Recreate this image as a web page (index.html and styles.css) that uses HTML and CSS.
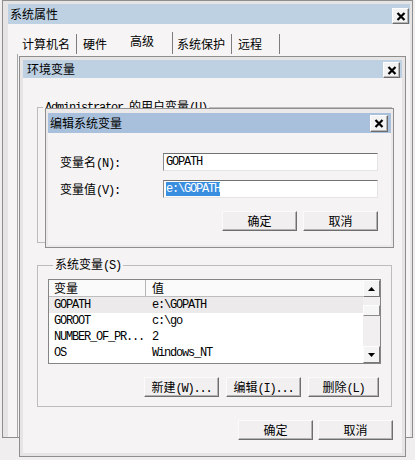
FILE: index.html
```html
<!DOCTYPE html>
<html lang="zh-CN">
<head>
<meta charset="utf-8">
<title>环境变量</title>
<link rel="stylesheet" href="styles.css">
</head>
<body>
<div class="win sys">
  <div class="titlebar tb-sys">
    <span class="title">系统属性</span>
    <span class="close"><svg width="10" height="9" viewBox="0 0 10 9"><path d="M1.5 1 L8.5 8 M8.5 1 L1.5 8" stroke="#000" stroke-width="2.2"/></svg></span>
  </div>
  <div class="syspage">
    <div class="tabs">
      <span class="tab t1">计算机名</span>
      <span class="tab t2">硬件</span>
      <span class="tab t3">高级</span>
      <span class="tab t4">系统保护</span>
      <span class="tab t5">远程</span>
    </div>
    <div class="panel"></div>
  </div>
</div>

<div class="win env">
  <div class="titlebar tb-env">
    <span class="title">环境变量</span>
    <span class="close"><svg width="10" height="9" viewBox="0 0 10 9"><path d="M1.5 1 L8.5 8 M8.5 1 L1.5 8" stroke="#000" stroke-width="2.2"/></svg></span>
  </div>
  <div class="envbody">
    <fieldset class="group user"><legend><span class="m">Administrator </span>的用户变量<span class="m">(U)</span></legend></fieldset>
    <fieldset class="group sysvars"><legend>系统变量<span class="m">(S)</span></legend>
      <div class="list">
        <div class="lv">
          <div class="lvhead"><span class="c1">变量</span><span class="c2">值</span></div>
          <div class="lvrow cur"><span class="c1 m">GOPATH</span><span class="c2 m">e:\GOPATH</span></div>
          <div class="lvrow"><span class="c1 m">GOROOT</span><span class="c2 m">c:\go</span></div>
          <div class="lvrow"><span class="c1 m">NUMBER_OF_PR...</span><span class="c2 m">2</span></div>
          <div class="lvrow"><span class="c1 m">OS</span><span class="c2 m">Windows_NT</span></div>
        </div>
        <div class="vscroll">
          <span class="sbtn"><svg width="7" height="4" viewBox="0 0 7 4"><path d="M0 4 L3.5 0 L7 4 Z" fill="#000"/></svg></span>
          <span class="track"><span class="thumb"></span></span>
          <span class="sbtn"><svg width="7" height="4" viewBox="0 0 7 4"><path d="M0 0 L3.5 4 L7 0 Z" fill="#000"/></svg></span>
        </div>
      </div>
      <div class="btnrow grp">
        <button class="btn">新建<span class="m">(W)...</span></button>
        <button class="btn">编辑<span class="m">(I)...</span></button>
        <button class="btn narrow">删除<span class="m">(L)</span></button>
      </div>
    </fieldset>
    <div class="btnrow dlg">
      <button class="btn">确定</button>
      <button class="btn">取消</button>
    </div>
  </div>
</div>

<div class="win edit">
  <div class="titlebar tb-edit">
    <span class="title">编辑系统变量</span>
    <span class="close big"><svg width="10" height="9" viewBox="0 0 10 9"><path d="M1.5 1 L8.5 8 M8.5 1 L1.5 8" stroke="#000" stroke-width="2.2"/></svg></span>
  </div>
  <div class="editbody">
    <div class="form">
      <span class="lbl">变量名<span class="m">(N):</span></span>
      <div class="field m">GOPATH</div>
      <span class="lbl">变量值<span class="m">(V):</span></span>
      <div class="field m"><span class="selected">e:\GOPATH</span></div>
    </div>
    <div class="btnrow ed">
      <button class="btn">确定</button>
      <button class="btn">取消</button>
    </div>
  </div>
</div>
</body>
</html>
```

FILE: styles.css
```css
* { box-sizing: border-box; }
html, body { margin: 0; padding: 0; }
body {
  position: relative;
  width: 415px;
  height: 460px;
  overflow: hidden;
  background: #f0eeee;
  font-family: "Noto Sans CJK SC", "Noto Sans", sans-serif;
  font-size: 12px;
  color: #000;
}
.m {
  font-family: "Liberation Mono", monospace;
  font-size: 12px;
  letter-spacing: -1.2px;
}

/* windows */
.win {
  position: absolute;
  display: flex;
  flex-direction: column;
  border: 1px solid #8e8e8e;
  background: #e6e4e4;
}
.titlebar {
  flex: none;
  display: flex;
  align-items: center;
  justify-content: space-between;
  background: #bdd1e3;
}
.title { line-height: 14px; white-space: nowrap; }
.close {
  width: 17px;
  height: 16px;
  display: flex;
  align-items: center;
  justify-content: center;
  background: #f4f3f3;
  border: 1px solid;
  border-color: #fdfdfd #6c6c6c #6c6c6c #fdfdfd;
  box-shadow: inset -1px -1px 0 #b5b5b5;
}

/* outer: 系统属性 */
.sys { left: 2px; top: 0; width: 411px; height: 438px; padding: 3px 2px 0 5px; }
.tb-sys { height: 20px; padding-left: 2px; align-items: flex-start; }
.tb-sys .title { margin-top: 3px; }
.tb-sys .close { margin-top: 4px; margin-right: 1px; }
.syspage { flex: 1; display: flex; flex-direction: column; background: #f6f4f4; padding-left: 9px; }
.tabs { display: flex; margin-top: 10px; height: 20px; }
.tab { height: 20px; line-height: 20px; white-space: nowrap; border-right: 1px solid #7d7d7d; }
.t1 { width: 60px; padding-left: 5px; }
.t2 { width: 45px; padding-left: 6px; border-right-color: transparent; }
.t3 { width: 51px; padding-left: 8px; line-height: 18px; margin-top: -2px; height: 22px; }
.t4 { width: 59px; padding-left: 4px; }
.t5 { width: 48px; padding-left: 6px; }
.panel { flex: 1; border-left: 1px solid #a6a6a6; }

/* env window */
.env { left: 19px; top: 56px; width: 387px; height: 401px; padding: 3px; }
.tb-env { height: 18px; padding-left: 4px; padding-right: 2px; }
.tb-env .close { height: 16px; margin-top: 2px; }
.envbody {
  flex: 1;
  display: flex;
  flex-direction: column;
  background: #f5f3f3;
  padding: 0 10px 0 14px;
}
.group {
  margin: 0;
  border: 1px solid #bdbbbb;
  min-width: 0;
}
.group legend {
  margin-left: 5px;
  padding: 0 2px;
  line-height: 16px;
  white-space: nowrap;
}
.user { margin-top: 20px; height: 145px; padding: 0; }
.sysvars { margin-top: 13px; padding: 5px 10px 9px 10px; }

.list {
  display: flex;
  height: 85px;
  border: 1px solid #858585;
  background: #fff;
}
.lv { flex: 1; }
.lvhead, .lvrow {
  display: grid;
  grid-template-columns: 97px 1fr;
  white-space: nowrap;
}
.lvhead { height: 17px; line-height: 16px; border-bottom: 1px solid #bdbdbd; background: #fbfafa; }
.lvhead .c1 { border-right: 1px solid #b5b5b5; }
.lvrow { height: 16px; line-height: 16px; }
.lvrow.cur { background: #eceaea; }
.c1 { padding-left: 5px; overflow: hidden; }
.c2 { padding-left: 6px; overflow: hidden; }

.vscroll { width: 17px; display: flex; flex-direction: column; background: #f1efef; }
.sbtn {
  height: 17px;
  display: flex;
  align-items: center;
  justify-content: center;
  background: #f5f4f4;
  border: 1px solid;
  border-color: #fdfdfd #777 #777 #fdfdfd;
}
.track { flex: 1; display: flex; flex-direction: column; }
.thumb {
  height: 11px;
  margin-top: 8px;
  background: #f7f6f6;
  border: 1px solid;
  border-color: #fdfdfd #8a8a8a #8a8a8a #fdfdfd;
}

/* buttons */
.btnrow { display: flex; justify-content: flex-end; }
.btn {
  width: 75px;
  height: 20px;
  padding: 0;
  margin: 0;
  font-family: inherit;
  font-size: 12px;
  line-height: 18px;
  color: #000;
  background: #f1efef;
  border: 1px solid;
  border-color: #fbfbfb #6e6e6e #6e6e6e #fbfbfb;
  box-shadow: inset -1px -1px 0 #b3b3b3;
  white-space: nowrap;
}
.btnrow.grp { margin-top: 13px; gap: 7px; margin-right: 2px; }
.btnrow.grp .narrow { width: 71px; }
.btnrow.dlg { margin-top: 13px; gap: 5px; margin-right: -1px; }

/* edit dialog */
.edit { left: 45px; top: 108px; width: 349px; height: 140px; padding: 4px 2px 2px 2px; background: #ebe9e9; }
.tb-edit { height: 20px; padding-left: 2px; padding-right: 3px; background: #a8c0dc; }
.tb-edit .close { width: 18px; height: 17px; }
.editbody { flex: 1; background: #f5f3f3; padding: 20px 13px 0 12px; }
.form {
  display: grid;
  grid-template-columns: 103px 1fr;
  row-gap: 9px;
  align-items: center;
}
.lbl { white-space: nowrap; }
.field {
  height: 18px;
  line-height: 16px;
  padding-left: 2px;
  background: #fff;
  border: 1px solid;
  border-color: #727272 #e4e4e4 #e4e4e4 #8a8a8a;
  white-space: nowrap;
}
.selected { background: #3a8ee0; color: #fff; }
.btnrow.ed { margin-top: 13px; gap: 6px; }
```
